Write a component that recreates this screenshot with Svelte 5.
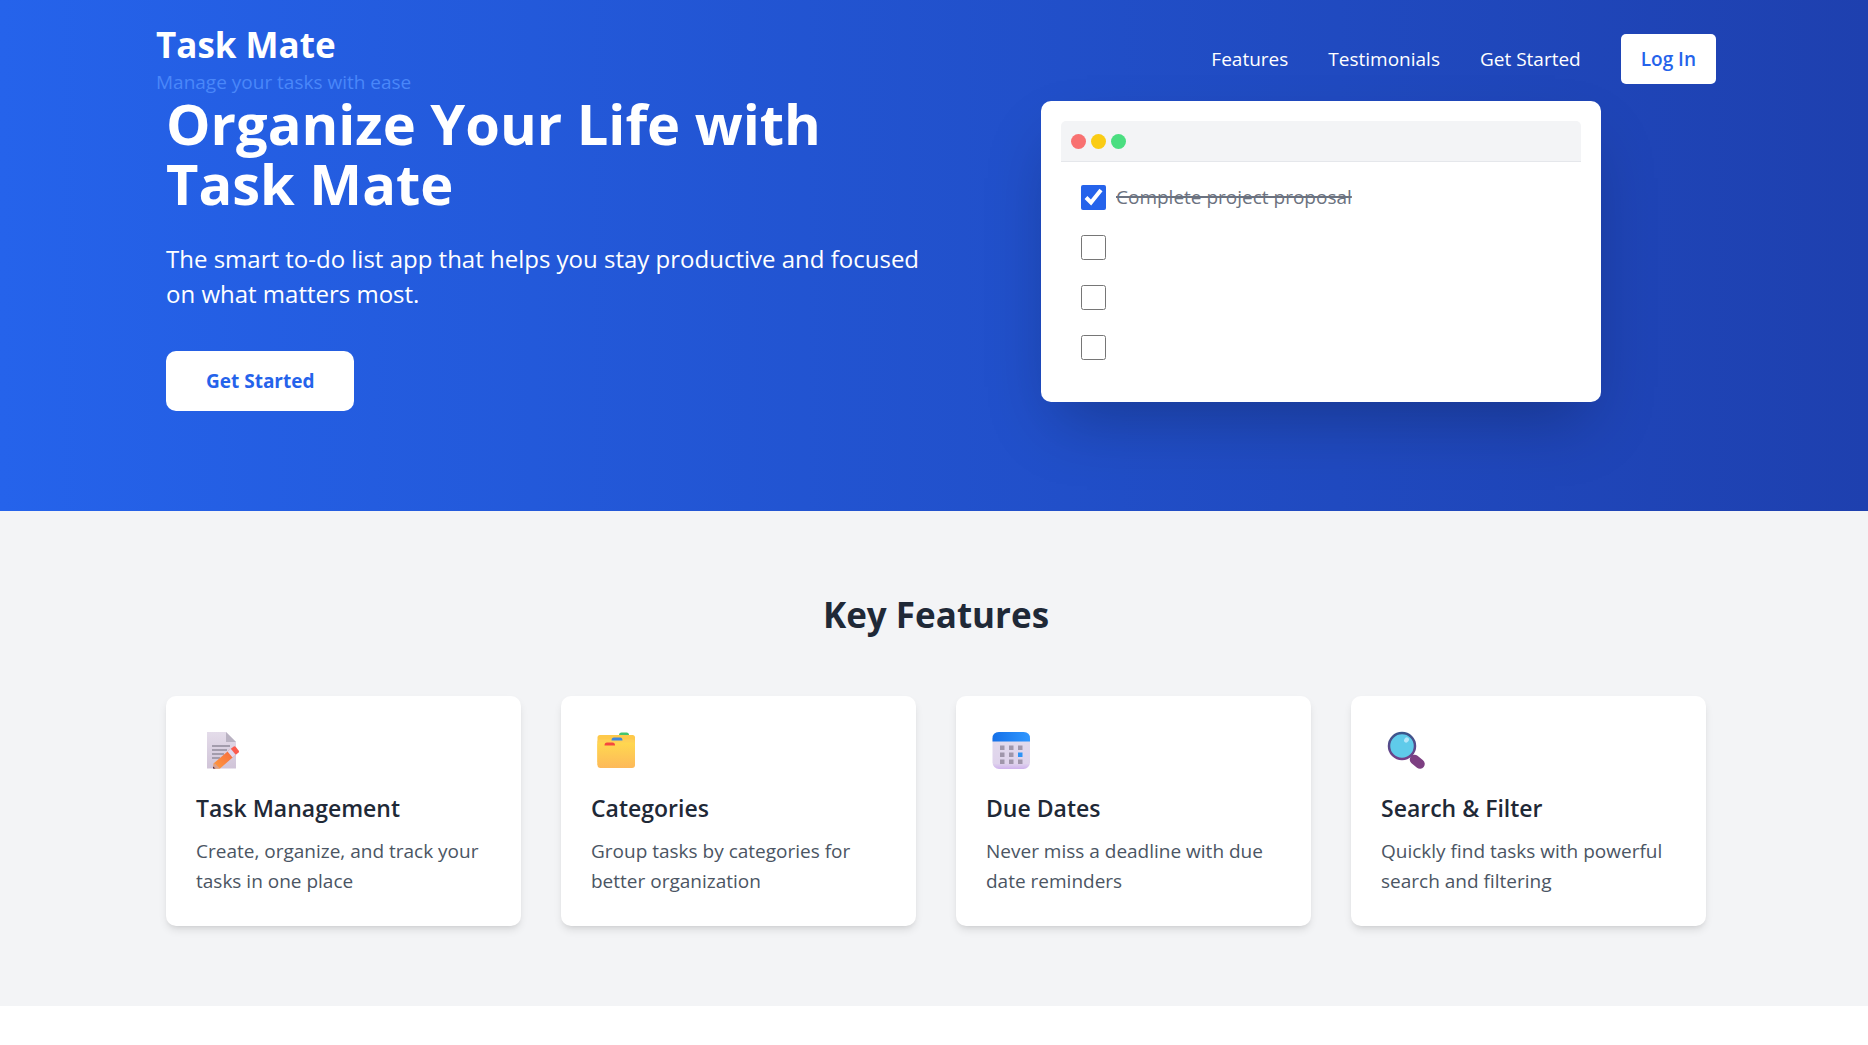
<script>
  const links = [
    { label: 'Features', href: '#features' },
    { label: 'Testimonials', href: '#testimonials' },
    { label: 'Get Started', href: '#get-started' }
  ];

  let tasks = $state([
    { label: 'Complete project proposal', done: true },
    { label: '', done: false },
    { label: '', done: false },
    { label: '', done: false }
  ]);

  const features = [
    { icon: 'note', title: 'Task Management', text: 'Create, organize, and track your tasks in one place' },
    { icon: 'folder', title: 'Categories', text: 'Group tasks by categories for better organization' },
    { icon: 'calendar', title: 'Due Dates', text: 'Never miss a deadline with due date reminders' },
    { icon: 'search', title: 'Search & Filter', text: 'Quickly find tasks with powerful search and filtering' }
  ];
</script>

<header class="site-header">
  <div class="header-inner">
    <div class="brand">
      <div class="brand-name">Task Mate</div>
      <p class="tagline">Manage your tasks with ease</p>
    </div>
    <nav class="nav" aria-label="Main">
      {#each links as link}
        <a class="nav-link" href={link.href}>{link.label}</a>
      {/each}
      <button class="login" type="button">Log In</button>
    </nav>
  </div>
</header>

<main>
  <section class="hero">
    <div class="hero-inner">
      <div class="hero-copy">
        <h1>Organize Your Life with Task Mate</h1>
        <p class="lead">The smart to-do list app that helps you stay productive and focused on what matters most.</p>
        <a class="cta" href="#get-started">Get Started</a>
      </div>
      <div class="hero-visual">
        <div class="window">
          <div class="window-bar">
            <span class="dot red"></span>
            <span class="dot yellow"></span>
            <span class="dot green"></span>
          </div>
          <ul class="tasks">
            {#each tasks as task, i}
              <li>
                <input id="task-{i}" type="checkbox" bind:checked={task.done} aria-label={task.label || `Task ${i + 1}`} />
                <label for="task-{i}" class:done={task.done}>{task.label}</label>
              </li>
            {/each}
          </ul>
        </div>
      </div>
    </div>
  </section>

  <section class="features" id="features">
    <div class="features-inner">
      <h2>Key Features</h2>
      <div class="cards">
        {#each features as feature}
          <article class="card">
            <svg class="icon" viewBox="0 0 50 45" aria-hidden="true">
              {#if feature.icon === 'note'}
                <defs>
                  <linearGradient id="paper" x1="0" y1="0" x2="0" y2="1">
                    <stop offset="0" stop-color="#e4dcea" /><stop offset="1" stop-color="#d0c4d8" />
                  </linearGradient>
                  <linearGradient id="pencil" x1="0" y1="1" x2="1" y2="0">
                    <stop offset="0" stop-color="#ff9b3d" /><stop offset="1" stop-color="#f5653f" />
                  </linearGradient>
                </defs>
                <path d="M11 6h19l10 10v26.500H11z" fill="url(#paper)" />
                <path d="M30 6l10 10H30z" fill="#b9b2c2" />
                <path d="M16 20h18M16 24h15M16 28h12M16 32h8" stroke="#a39cac" stroke-width="2" fill="none" />
                <path d="M17.500 37.500l17-14.500 5 6L24 42.500h-6.500z" fill="url(#pencil)" />
                <path d="M18.500 37l5.500 5.500H17z" fill="#d9a08e" />
                <path d="M17 40.500l2.500 2H17z" fill="#4a2c4d" />
                <path d="M31.500 25.500l3.300-2.800 5 6-3.300 2.700z" fill="#dfd8ef" />
                <path d="M34.800 22.700l3-2.200q1-.6 1.800.3l3.200 4q.6.900-.2 1.700l-2.800 2.200z" fill="#fb5b4f" />
              {:else if feature.icon === 'folder'}
                <defs>
                  <linearGradient id="folder" x1="0" y1="0" x2="0" y2="1">
                    <stop offset="0" stop-color="#ffd84f" /><stop offset="1" stop-color="#fdb95a" />
                  </linearGradient>
                </defs>
                <path d="M28 10V9q0-2.500 2.500-2.500h5Q38 6.500 38 9v1z" fill="#45c56d" />
                <path d="M9 9h32.500q2.500 0 2.500 2.500V39H6.500V11.500Q6.500 9 9 9z" fill="#fec94a" />
                <path d="M6.500 16q0-2.500 2.500-2.500h12l2-1.500h8l2 1.500h8.500q2.500 0 2.500 2.500v20H6.500z" fill="#ffd055" />
                <path d="M20.500 14.500q0-3 2.500-3h6q2.500 0 2.500 3z" fill="#3f86db" />
                <path d="M6.500 19Q6.500 16.500 9 16.500h32.500q2.500 0 2.500 2.500v20q0 3-3 3H9.500q-3 0-3-3z" fill="url(#folder)" />
                <path d="M13.500 19.500q0-3 2.500-3h5.500q2.500 0 2.500 3z" fill="#f5483f" />
              {:else if feature.icon === 'calendar'}
                <defs>
                  <linearGradient id="sheet" x1="0" y1="0" x2="0" y2="1">
                    <stop offset="0" stop-color="#e3dcec" /><stop offset=".85" stop-color="#dfd3ec" /><stop offset="1" stop-color="#cfb2ee" />
                  </linearGradient>
                  <linearGradient id="band" x1="0" y1="0" x2="1" y2="0">
                    <stop offset="0" stop-color="#1570e8" /><stop offset="1" stop-color="#2f97ff" />
                  </linearGradient>
                </defs>
                <rect x="6.500" y="6" width="37.500" height="37" rx="6.500" fill="url(#sheet)" />
                <path d="M6.500 15.500v-3q0-6.500 6.500-6.500h24.500q6.500 0 6.500 6.500v3z" fill="url(#band)" />
                <g fill="#a096ab">
                  <rect x="14" y="19.500" width="4.500" height="4.500" /><rect x="23" y="19.500" width="4.500" height="4.500" /><rect x="32" y="19.500" width="4.500" height="4.500" />
                  <rect x="14" y="26.500" width="4.500" height="4.500" /><rect x="23" y="26.500" width="4.500" height="4.500" />
                  <rect x="14" y="33.500" width="4.500" height="4.500" /><rect x="23" y="33.500" width="4.500" height="4.500" /><rect x="32" y="33.500" width="4.500" height="4.500" />
                </g>
                <rect x="32" y="26.500" width="4.500" height="4.500" fill="#2e93f5" />
              {:else}
                <defs>
                  <linearGradient id="rim" x1="0" y1="0" x2="0" y2="1">
                    <stop offset="0" stop-color="#3a568c" /><stop offset="1" stop-color="#75408a" />
                  </linearGradient>
                </defs>
                <path d="M29 28.500l5 5" stroke="#6a4468" stroke-width="3" />
                <path d="M33.500 33.500l5.500 4.500" stroke="#7d3f82" stroke-width="9.500" stroke-linecap="round" />
                <circle cx="21" cy="20" r="13" fill="#5fcbea" stroke="url(#rim)" stroke-width="2.500" />
                <ellipse cx="25.500" cy="14" rx="2.200" ry="2.800" fill="#b4e6f8" transform="rotate(35 25.500 14)" />
              {/if}
            </svg>
            <h3>{feature.title}</h3>
            <p>{feature.text}</p>
          </article>
        {/each}
      </div>
    </div>
  </section>
</main>

<style>
  :global(body) {
    margin: 0;
    background: #ffffff;
    font-family: 'Segoe UI', 'Open Sans', 'Noto Sans', sans-serif;
    font-size: 19px;
    line-height: 30px;
    color: #1f2937;
  }

  :global(*) {
    box-sizing: border-box;
  }

  h1, h2, h3, p, ul {
    margin: 0;
    padding: 0;
  }

  a {
    text-decoration: none;
  }

  button, input {
    font: inherit;
  }

  .site-header {
    position: absolute;
    inset: 0 0 auto 0;
    padding: 21px 0 20px 4px;
  }

  .header-inner {
    display: flex;
    align-items: center;
    justify-content: space-between;
    max-width: 1560px;
    margin: 0 auto;
  }

  .brand-name {
    font-size: 35px;
    line-height: 48px;
    font-weight: 700;
    color: #ffffff;
  }

  .tagline {
    line-height: 27px;
    color: #4a87f9;
  }

  .nav {
    display: flex;
    align-items: center;
    gap: 40px;
  }

  .nav-link {
    color: #ffffff;
  }

  .login {
    padding: 10px 20px;
    border: 0;
    border-radius: 5px;
    background: #ffffff;
    color: #2563eb;
    font-weight: 600;
    cursor: pointer;
  }

  .hero {
    padding: 93px 0 100px 4px;
    background: linear-gradient(90deg, #2563eb, #1e40af);
    color: #ffffff;
  }

  .hero-inner {
    display: grid;
    grid-template-columns: 1fr 1fr;
    align-items: start;
    max-width: 1540px;
    margin: 0 auto;
  }

  h1 {
    margin-bottom: 28px;
    font-size: 56px;
    line-height: 60px;
    font-weight: 700;
  }

  .lead {
    margin-bottom: 40px;
    font-size: 24px;
    line-height: 35px;
  }

  .hero-copy {
    display: flex;
    flex-direction: column;
    align-items: flex-start;
  }

  .cta {
    padding: 15px 40px;
    border-radius: 10px;
    background: #ffffff;
    color: #2563eb;
    font-weight: 700;
  }

  .hero-visual {
    display: flex;
    justify-content: center;
    padding-top: 8px;
  }

  .window {
    width: 100%;
    max-width: 560px;
    padding: 20px;
    border-radius: 10px;
    background: #ffffff;
    box-shadow: 0 31px 63px -15px rgba(0, 0, 0, 0.25);
  }

  .window-bar {
    display: flex;
    align-items: center;
    gap: 5px;
    height: 41px;
    padding: 0 10px;
    border-bottom: 1px solid #e5e7eb;
    border-radius: 5px 5px 0 0;
    background: #f3f4f6;
  }

  .dot {
    width: 15px;
    height: 15px;
    border-radius: 50%;
  }

  .red { background: #f87171; }
  .yellow { background: #facc15; }
  .green { background: #4ade80; }

  .tasks {
    display: flex;
    flex-direction: column;
    gap: 20px;
    padding: 20px;
    list-style: none;
  }

  .tasks li {
    display: flex;
    align-items: center;
    gap: 10px;
    height: 30px;
  }

  .tasks input {
    width: 25px;
    height: 25px;
    margin: 0;
    accent-color: #2563eb;
  }

  .done {
    color: #6b7280;
    text-decoration: line-through 2px;
  }

  .features {
    padding: 80px 0 80px 4px;
    background: #f3f4f6;
  }

  .features-inner {
    max-width: 1540px;
    margin: 0 auto;
  }

  h2 {
    margin-bottom: 57px;
    font-size: 35px;
    line-height: 48px;
    font-weight: 700;
    text-align: center;
  }

  .cards {
    display: grid;
    grid-template-columns: repeat(4, 1fr);
    gap: 40px;
  }

  .card {
    padding: 30px;
    border-radius: 10px;
    background: #ffffff;
    box-shadow: 0 5px 8px -1px rgba(0, 0, 0, 0.1), 0 3px 5px -3px rgba(0, 0, 0, 0.1);
  }

  .icon {
    display: block;
    width: 50px;
    height: 45px;
    margin-bottom: 20px;
  }

  h3 {
    margin-bottom: 10px;
    font-size: 23px;
    line-height: 35px;
    font-weight: 600;
  }

  .card p {
    color: #4b5563;
  }
</style>
